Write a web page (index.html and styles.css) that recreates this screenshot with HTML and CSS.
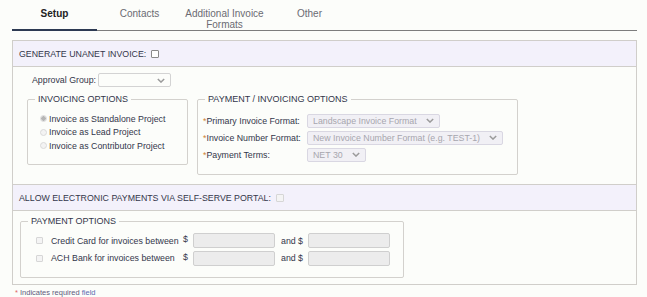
FILE: index.html
```html
<!DOCTYPE html>
<html lang="en">
<head>
    <meta charset="UTF-8">
    <title>Customer Setup</title>
    <link rel="stylesheet" href="styles.css">
</head>
<body>
    <nav class="tabs">
        <div class="tab active">Setup</div>
        <div class="tab">Contacts</div>
        <div class="tab">Additional Invoice<br>Formats</div>
        <div class="tab">Other</div>
    </nav>

    <div class="section">
        <div class="section-head">
            <span>GENERATE UNANET INVOICE:</span>
            <input type="checkbox" class="check">
        </div>
        <div class="section-body body-invoice">
            <div class="approval-row">
                <label>Approval Group:</label>
                <div class="select select-plain" style="width:73px">
                    <span></span>
                    <svg class="chev" viewBox="0 0 10 6"><path d="M1 1l4 4 4-4"/></svg>
                </div>
            </div>

            <div class="fieldset-row">
                <fieldset class="box box-invoicing">
                    <legend>INVOICING OPTIONS</legend>
                    <div class="radio-list">
                        <div class="radio-row"><span class="radio checked"></span>Invoice as Standalone Project</div>
                        <div class="radio-row"><span class="radio"></span>Invoice as Lead Project</div>
                        <div class="radio-row"><span class="radio"></span>Invoice as Contributor Project</div>
                    </div>
                </fieldset>

                <fieldset class="box box-payment">
                    <legend>PAYMENT / INVOICING OPTIONS</legend>
                    <div class="field-list">
                        <div class="field-row">
                            <label><span class="req">*</span>Primary Invoice Format:</label>
                            <div class="select" style="width:133px">
                                <span>Landscape Invoice Format</span>
                                <svg class="chev" viewBox="0 0 10 6"><path d="M1 1l4 4 4-4"/></svg>
                            </div>
                        </div>
                        <div class="field-row">
                            <label><span class="req">*</span>Invoice Number Format:</label>
                            <div class="select" style="width:196px">
                                <span>New Invoice Number Format (e.g. TEST-1)</span>
                                <svg class="chev" viewBox="0 0 10 6"><path d="M1 1l4 4 4-4"/></svg>
                            </div>
                        </div>
                        <div class="field-row">
                            <label><span class="req">*</span>Payment Terms:</label>
                            <div class="select" style="width:59px">
                                <span>NET 30</span>
                                <svg class="chev" viewBox="0 0 10 6"><path d="M1 1l4 4 4-4"/></svg>
                            </div>
                        </div>
                    </div>
                </fieldset>
            </div>
        </div>

        <div class="section-head head-second">
            <span>ALLOW ELECTRONIC PAYMENTS VIA SELF-SERVE PORTAL:</span>
            <input type="checkbox" class="check" disabled>
        </div>
        <div class="section-body body-payment">
            <fieldset class="box box-options">
                <legend>PAYMENT OPTIONS</legend>
                <div class="option-list">
                    <div class="option-row">
                        <input type="checkbox" class="check" disabled>
                        <span class="option-label">Credit Card for invoices between</span>
                        <span class="dollar">$</span>
                        <input type="text" class="amount" disabled>
                        <span class="and">and $</span>
                        <input type="text" class="amount" disabled>
                    </div>
                    <div class="option-row">
                        <input type="checkbox" class="check" disabled>
                        <span class="option-label">ACH Bank for invoices between</span>
                        <span class="dollar">$</span>
                        <input type="text" class="amount" disabled>
                        <span class="and">and $</span>
                        <input type="text" class="amount" disabled>
                    </div>
                </div>
            </fieldset>
        </div>
    </div>

    <p class="footnote"><span class="req-red">*</span> Indicates required <span class="field">field</span></p>
</body>
</html>
```

FILE: styles.css
```css
body {
    margin: 0;
    padding: 0;
    background-color: #fcfdfa;
    color: #33364a;
    font-family: "Liberation Sans", Arial, sans-serif;
    font-size: 8.8px;
}

/* Tabs */
.tabs {
    display: flex;
    margin: 0 10px 0 12px;
    height: 31px;
    box-sizing: border-box;
    border-bottom: 1px solid #7d7d7d;
}

.tab {
    width: 85px;
    box-sizing: border-box;
    padding-top: 8px;
    text-align: center;
    font-size: 10px;
    line-height: 11px;
    color: #6b6b72;
}

.tab.active {
    font-weight: bold;
    color: #222;
    border-bottom: 2px solid #2d3a52;
    margin-bottom: -1px;
}

/* Section box */
.section {
    margin: 9px 10px 0 12px;
    border: 1px solid #d0ceca;
}

.section-head {
    display: flex;
    align-items: center;
    gap: 5px;
    height: 25px;
    padding-left: 6px;
    background-color: #f3f1fb;
    border-bottom: 1px solid #d0ceca;
}

.head-second {
    border-top: 1px solid #d0ceca;
}

.check {
    appearance: none;
    margin: 0;
    width: 8px;
    height: 8px;
    border: 1px solid #8a8a8a;
    border-radius: 1px;
    background: #fff;
    box-sizing: border-box;
}

.check:disabled {
    border-color: #d6d6d6;
    background: #f4f4f4;
}

.body-invoice {
    padding: 6px 0 9px 0;
}

.approval-row {
    display: flex;
    align-items: center;
    gap: 2px;
    padding-left: 19px;
    height: 14px;
}

/* Fake selects */
.select {
    display: flex;
    align-items: center;
    justify-content: space-between;
    height: 14px;
    box-sizing: border-box;
    padding: 0 5px 0 5px;
    border: 1px solid #d9d7e2;
    border-radius: 2px;
    background-color: #f1f0f5;
    color: #a7a6ae;
    white-space: nowrap;
}

.select-plain {
    background-color: #fcfdfa;
    border-color: #d3d3d3;
}

.chev {
    width: 8px;
    height: 5px;
    fill: none;
    stroke: #9b9b9b;
    stroke-width: 1.8;
    flex-shrink: 0;
}

/* Fieldsets */
.fieldset-row {
    display: flex;
    align-items: flex-start;
    gap: 9px;
    margin-top: 7px;
    padding-left: 14px;
}

.box {
    margin: 0;
    padding: 0;
    border: 1px solid #d3d1cd;
    border-radius: 2px;
    min-width: 0;
}

.box legend {
    margin-left: 7px;
    padding: 0 3px;
    font-size: 9px;
    line-height: 11px;
}

.box-invoicing {
    width: 161px;
    box-sizing: border-box;
}

.radio-list {
    padding: 7px 0 11px 12px;
}

.radio-row {
    display: flex;
    align-items: center;
    gap: 2px;
    height: 13.5px;
}

.radio {
    width: 7px;
    height: 7px;
    box-sizing: border-box;
    border: 1px solid #dadada;
    border-radius: 50%;
    background: #f3f3f3;
}

.radio.checked {
    background: radial-gradient(circle, #b5b5b5 0 2px, #e6e6e6 2.5px);
}

.box-payment {
    width: 321px;
    box-sizing: border-box;
}

.field-list {
    padding: 7px 0 11px 5px;
}

.field-row {
    display: flex;
    align-items: center;
    height: 17px;
}

.field-row label {
    width: 104px;
}

.req {
    color: #cc8334;
}

/* Payment options */
.body-payment {
    padding: 5px 0 6px 7px;
}

.box-options {
    width: 384px;
    box-sizing: border-box;
}

.option-list {
    padding: 5px 0 10px 15px;
}

.option-row {
    display: grid;
    grid-template-columns: 7px 140px 10px 82px 33px 82px;
    align-items: center;
    height: 17.5px;
    white-space: nowrap;
}

.option-row .check {
    width: 7px;
    height: 7px;
}

.option-label {
    padding-left: 8px;
}

.dollar {
    align-self: start;
    padding-top: 2px;
}

.and {
    padding-left: 6px;
}

.amount {
    margin: 0;
    width: 82px;
    height: 15px;
    box-sizing: border-box;
    border: 1px solid #cfcfcf;
    border-radius: 2px;
    background-color: #ececec;
}

.footnote {
    margin: 3px 0 0 15px;
    font-size: 7.5px;
    color: #5f5b7d;
}

.req-red {
    color: #e06666;
}

.field {
    color: #5b6bb0;
}
```
